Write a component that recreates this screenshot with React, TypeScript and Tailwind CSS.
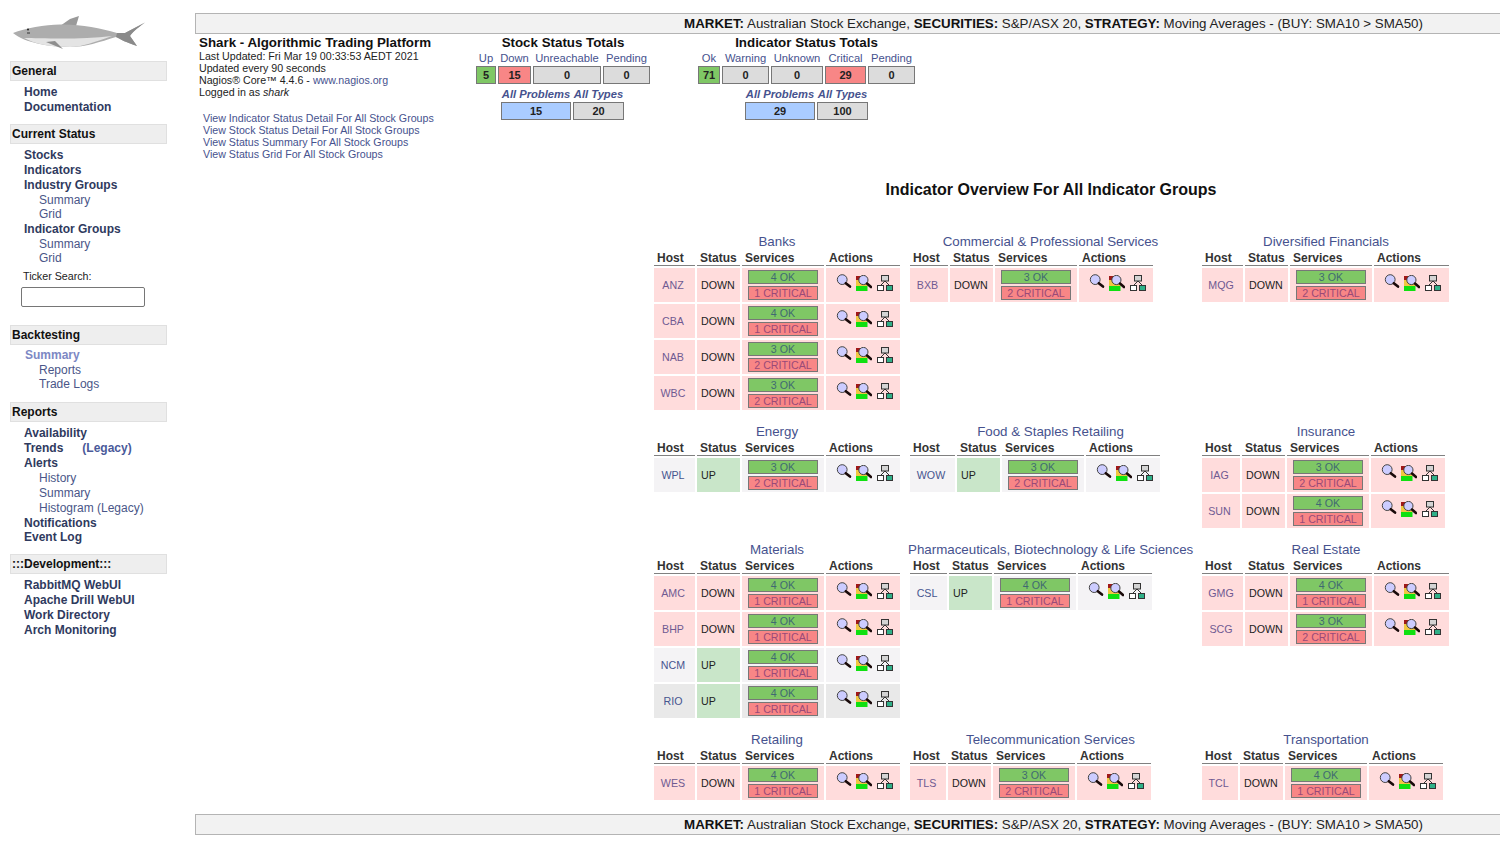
const font = "font-['Liberation_Sans',Arial,sans-serif]";

type NavItem = { label: string; kind: "main" | "sub" | "active"; extra?: string };

const MagnifierIcon = () => (
  <svg viewBox="0 0 16 16" className="w-4 h-4 shrink-0">
    <circle cx="6.2" cy="5.6" r="4.9" fill="#ccccff" stroke="#444" strokeWidth="1" />
    <path d="M9.8 9.2 L14 12.6" stroke="#1a0a0a" strokeWidth="2.6" strokeLinecap="round" />
  </svg>
);

const ChartIcon = () => (
  <svg viewBox="0 0 16 16" className="w-4 h-4 shrink-0 mt-[1px]">
    <rect x="0" y="1" width="5" height="5" fill="#a01818" />
    <rect x="0" y="5" width="11.5" height="6" fill="#f0c840" />
    <rect x="0" y="11" width="11.5" height="5" fill="#10e010" />
    <circle cx="7.4" cy="5" r="4.6" fill="#ccccff" stroke="#444" strokeWidth="1" />
    <path d="M11 8.6 L15 12" stroke="#1a0a0a" strokeWidth="2.6" strokeLinecap="round" />
  </svg>
);

const NetworkIcon = () => (
  <svg viewBox="0 0 16 16" className="w-4 h-4 shrink-0 ml-[1px] mt-[1px]">
    <path d="M8 6 L3.5 10.5 M8 6 L12.5 10.5" stroke="#333" strokeWidth="1" fill="none" />
    <rect x="4.5" y="0.5" width="7" height="5.5" fill="#d4d4d4" stroke="#333" />
    <rect x="0.5" y="10.5" width="6" height="5" fill="#fff" stroke="#333" />
    <rect x="9.5" y="10.5" width="6" height="5" fill="#2fb088" stroke="#333" />
  </svg>
);

const SharkLogo = () => (
  <svg viewBox="0 0 150 50" className="w-[150px] h-[50px] block">
    <path d="M60 25 L70 18 L79 15 L76 25 Z" fill="#9a9a9a" />
    <path
      d="M13 32 C25 27 45 24 60 23.5 C80 23 100 27 117 32 L125 32 L145 21.5 C136 28 132 32 130 35 L137 45 C127 42 120 38 116 36 C100 41 85 46 70 46 C50 46 25 42 13 32 Z"
      fill="#adadad"
    />
    <path d="M24 37 C40 37 80 39 112 35 C95 41 82 46 70 46 C50 46 35 43 24 37 Z" fill="#e4e4e4" />
    <path d="M46 41 L63 48 L55 40 Z" fill="#8e8e8e" />
    <path d="M117 32 L125 32 L145 21.5 C136 28 132 32 130 35 L137 45 C127 42 120 38 116 36 Z" fill="#8a8a8a" />
    <circle cx="28" cy="28.5" r="1" fill="#222" />
    <path d="M27 32 L30 32" stroke="#333" strokeWidth="1" />
  </svg>
);

const navClass = (kind: NavItem["kind"]) => {
  if (kind === "main") return "font-bold text-[#2f3a5e] pl-[14px]";
  if (kind === "active") return "font-bold text-[#7c88c4] pl-[15px]";
  return "text-[#4a5688] pl-[29px]";
};

const NavList = ({ items, spacing = "pt-[4px] leading-[14.7px]" }: { items: NavItem[]; spacing?: string }) => (
  <ul className={spacing}>
    {items.map((item) => (
      <li key={item.label + item.kind} className={`text-[12px] whitespace-nowrap ${navClass(item.kind)}`}>
        {item.label}
        {item.extra && <span className="font-bold text-[#4a5a9a] pl-[19px]">{item.extra}</span>}
      </li>
    ))}
  </ul>
);

const NavHeader = ({ title }: { title: string }) => (
  <div className="h-5 w-[157px] bg-[#eeeeee] border border-[#e0e0e0] px-[1px] text-[12px] leading-[18px] font-bold text-[#111]">
    {title}
  </div>
);

const Sidebar = () => (
  <aside className="w-[195px] shrink-0">
    <div className="pt-[1px] pb-[10px]">
      <SharkLogo />
    </div>
    <div className="pl-[10px]">
      <NavHeader title="General" />
      <NavList
        items={[
          { label: "Home", kind: "main" },
          { label: "Documentation", kind: "main" },
        ]}
      />
      <div className="h-[10px]" />
      <NavHeader title="Current Status" />
      <NavList
        items={[
          { label: "Stocks", kind: "main" },
          { label: "Indicators", kind: "main" },
          { label: "Industry Groups", kind: "main" },
          { label: "Summary", kind: "sub" },
          { label: "Grid", kind: "sub" },
          { label: "Indicator Groups", kind: "main" },
          { label: "Summary", kind: "sub" },
          { label: "Grid", kind: "sub" },
        ]}
      />
      <div className="pl-[13px] pt-[3px] text-[10.7px] leading-[14px] text-[#222]">Ticker Search:</div>
      <input className="block ml-[11px] mt-[4px] w-[124px] h-5 bg-white border border-[#767676] rounded-[2px]" />
      <div className="h-[18px]" />
      <NavHeader title="Backtesting" />
      <NavList
        spacing="pt-[3px] leading-[14.7px]"
        items={[
          { label: "Summary", kind: "active" },
          { label: "Reports", kind: "sub" },
          { label: "Trade Logs", kind: "sub" },
        ]}
      />
      <div className="h-[10px]" />
      <NavHeader title="Reports" />
      <NavList
        spacing="pt-[4px] leading-[14.9px]"
        items={[
          { label: "Availability", kind: "main" },
          { label: "Trends", kind: "main", extra: "(Legacy)" },
          { label: "Alerts", kind: "main" },
          { label: "History", kind: "sub" },
          { label: "Summary", kind: "sub" },
          { label: "Histogram (Legacy)", kind: "sub" },
          { label: "Notifications", kind: "main" },
          { label: "Event Log", kind: "main" },
        ]}
      />
      <div className="h-[9px]" />
      <NavHeader title=":::Development:::" />
      <NavList
        spacing="pt-[4px] leading-[15px]"
        items={[
          { label: "RabbitMQ WebUI", kind: "main" },
          { label: "Apache Drill WebUI", kind: "main" },
          { label: "Work Directory", kind: "main" },
          { label: "Arch Monitoring", kind: "main" },
        ]}
      />
    </div>
  </aside>
);

const MarketBar = () => (
  <div className="h-[21px] bg-[#f2f2f2] border border-r-0 border-[#b4b4b4] pl-[411px] text-center text-[13.33px] leading-[19px] text-[#222] whitespace-nowrap">
    <b className="text-[#111]">MARKET:</b> Australian Stock Exchange, <b className="text-[#111]">SECURITIES:</b> S&amp;P/ASX 20, <b className="text-[#111]">STRATEGY:</b> Moving Averages - (BUY: SMA10 &gt; SMA50)
  </div>
);

const cellTone: Record<string, string> = {
  up: "bg-[#7fc765]",
  critical: "bg-[#f88686]",
  problem: "bg-[#aaccff]",
  plain: "bg-[#dcdcdc]",
};

type Total = { label: string; value: string; tone: string };

const TotalsRow = ({ cols, items, italic }: { cols: string; items: Total[]; italic?: boolean }) => (
  <div className={`grid gap-x-[2px] justify-center ${cols}`}>
    {items.map((t) => (
      <div key={t.label} className={`h-[15px] text-center text-[11.2px] leading-[15px] text-[#46528e] whitespace-nowrap ${italic ? "italic font-bold" : ""}`}>
        {t.label}
      </div>
    ))}
    {items.map((t) => (
      <div key={t.label + "v"} className={`h-[18px] border border-[#777] text-center text-[11px] leading-[16px] font-bold text-[#222] ${cellTone[t.tone]}`}>
        {t.value}
      </div>
    ))}
  </div>
);

const TotalsBlock = ({ title, children, width }: { title: string; children: React.ReactNode; width: string }) => (
  <div className={`shrink-0 ${width}`}>
    <div className="h-[16px] text-center text-[13.33px] leading-[15px] font-bold text-[#111] whitespace-nowrap">{title}</div>
    {children}
  </div>
);

const TopPanel = () => (
  <div className="flex pt-[1px] h-[128px]">
    <div className="w-[281px] shrink-0 pl-[4px] text-[#222]">
      <div className="h-[15px] text-[13.33px] leading-[15px] font-bold text-[#111] whitespace-nowrap">Shark - Algorithmic Trading Platform</div>
      <div className="text-[10.67px] leading-[12px] whitespace-nowrap">
        <div>Last Updated: Fri Mar 19 00:33:53 AEDT 2021</div>
        <div>Updated every 90 seconds</div>
        <div>
          Nagios® Core™ 4.4.6 - <span className="text-[#46528e]">www.nagios.org</span>
        </div>
        <div>
          Logged in as <i>shark</i>
        </div>
      </div>
      <div className="pt-[14px] pl-[4px] text-[10.67px] leading-[12px] text-[#46528e] whitespace-nowrap">
        <div>View Indicator Status Detail For All Stock Groups</div>
        <div>View Stock Status Detail For All Stock Groups</div>
        <div>View Status Summary For All Stock Groups</div>
        <div>View Status Grid For All Stock Groups</div>
      </div>
    </div>
    <TotalsBlock title="Stock Status Totals" width="w-[174px]">
      <TotalsRow
        cols="grid-cols-[20px_33px_68px_47px]"
        items={[
          { label: "Up", value: "5", tone: "up" },
          { label: "Down", value: "15", tone: "critical" },
          { label: "Unreachable", value: "0", tone: "plain" },
          { label: "Pending", value: "0", tone: "plain" },
        ]}
      />
      <div className="h-[3px]" />
      <TotalsRow
        italic
        cols="grid-cols-[70px_51px] -ml-[1px]"
        items={[
          { label: "All Problems", value: "15", tone: "problem" },
          { label: "All Types", value: "20", tone: "plain" },
        ]}
      />
    </TotalsBlock>
    <div className="w-[48px] shrink-0" />
    <TotalsBlock title="Indicator Status Totals" width="w-[217px]">
      <TotalsRow
        cols="grid-cols-[22px_47px_52px_41px_47px]"
        items={[
          { label: "Ok", value: "71", tone: "up" },
          { label: "Warning", value: "0", tone: "plain" },
          { label: "Unknown", value: "0", tone: "plain" },
          { label: "Critical", value: "29", tone: "critical" },
          { label: "Pending", value: "0", tone: "plain" },
        ]}
      />
      <div className="h-[3px]" />
      <TotalsRow
        italic
        cols="grid-cols-[70px_51px]"
        items={[
          { label: "All Problems", value: "29", tone: "problem" },
          { label: "All Types", value: "100", tone: "plain" },
        ]}
      />
    </TotalsBlock>
  </div>
);

type Host = { name: string; up?: boolean; ok: number; crit: number; dark?: boolean };
type Group = { title: string; cols: string; titleClass: string; tableClass: string; hosts: Host[] };

const HostRow = ({ host }: { host: Host }) => {
  const rowBg = host.up ? (host.dark ? "bg-[#e9e9e9]" : "bg-[#f4f3f5]") : "bg-[#ffdcdc]";
  const hostText = host.up ? "text-[#47558f]" : "text-[#6f5a92]";
  return (
    <>
      <div className={`h-[34px] flex items-center justify-center text-[10.67px] pr-[3px] ${rowBg} ${hostText}`}>{host.name}</div>
      <div className={`h-[34px] flex items-center pl-1 text-[10.67px] text-[#222] ${host.up ? "bg-[#c9e6c9]" : rowBg}`}>
        {host.up ? "UP" : "DOWN"}
      </div>
      <div className={`h-[34px] flex flex-col items-center pt-[2px] gap-[2px] ${rowBg}`}>
        <div className="w-[70px] h-[14px] border border-[#777] bg-[#7fc765] text-center text-[10.67px] leading-[12px] text-[#3f6a72]">
          {host.ok} OK
        </div>
        <div className="w-[70px] h-[14px] border border-[#777] bg-[#f88686] text-center text-[10.67px] leading-[12px] text-[#9a4a78]">
          {host.crit} CRITICAL
        </div>
      </div>
      <div className={`h-[34px] flex items-start pl-[10px] pt-[6px] gap-[4px] ${rowBg}`}>
        <MagnifierIcon />
        <ChartIcon />
        <NetworkIcon />
      </div>
    </>
  );
};

const GroupTable = ({ group }: { group: Group }) => (
  <div>
    <div className={`h-4 text-center text-[13.33px] leading-[16px] text-[#46528e] whitespace-nowrap ${group.titleClass}`}>{group.title}</div>
    <div className={`grid gap-[2px] w-max ${group.cols} ${group.tableClass}`}>
      {["Host", "Status", "Services", "Actions"].map((h) => (
        <div key={h} className="h-4 pl-[3px] border-b border-[#808080] text-[12px] leading-[17px] font-bold text-[#333]">
          {h}
        </div>
      ))}
      {group.hosts.map((host) => (
        <HostRow key={host.name} host={host} />
      ))}
    </div>
  </div>
);

const col1 = { titleClass: "pr-[8px]", tableClass: "" };
const col2 = { titleClass: "pr-[9px]", tableClass: "ml-[2px]" };
const col3 = { titleClass: "", tableClass: "" };

const groups: Group[] = [
  {
    title: "Banks",
    cols: "grid-cols-[41px_43px_82px_74px]",
    ...col1,
    hosts: [
      { name: "ANZ", ok: 4, crit: 1 },
      { name: "CBA", ok: 4, crit: 1 },
      { name: "NAB", ok: 3, crit: 2 },
      { name: "WBC", ok: 3, crit: 2 },
    ],
  },
  {
    title: "Commercial & Professional Services",
    cols: "grid-cols-[38px_43px_82px_74px]",
    ...col2,
    hosts: [{ name: "BXB", ok: 3, crit: 2 }],
  },
  {
    title: "Diversified Financials",
    cols: "grid-cols-[41px_43px_82px_75px]",
    ...col3,
    hosts: [{ name: "MQG", ok: 3, crit: 2 }],
  },
  {
    title: "Energy",
    cols: "grid-cols-[41px_43px_82px_74px]",
    ...col1,
    hosts: [{ name: "WPL", up: true, ok: 3, crit: 2 }],
  },
  {
    title: "Food & Staples Retailing",
    cols: "grid-cols-[45px_43px_82px_74px]",
    ...col2,
    hosts: [{ name: "WOW", up: true, ok: 3, crit: 2 }],
  },
  {
    title: "Insurance",
    cols: "grid-cols-[38px_43px_82px_74px]",
    ...col3,
    hosts: [
      { name: "IAG", ok: 3, crit: 2 },
      { name: "SUN", ok: 4, crit: 1 },
    ],
  },
  {
    title: "Materials",
    cols: "grid-cols-[41px_43px_82px_74px]",
    ...col1,
    hosts: [
      { name: "AMC", ok: 4, crit: 1 },
      { name: "BHP", ok: 4, crit: 1 },
      { name: "NCM", up: true, ok: 4, crit: 1 },
      { name: "RIO", up: true, dark: true, ok: 4, crit: 1 },
    ],
  },
  {
    title: "Pharmaceuticals, Biotechnology & Life Sciences",
    cols: "grid-cols-[37px_43px_82px_74px]",
    ...col2,
    hosts: [{ name: "CSL", up: true, ok: 4, crit: 1 }],
  },
  {
    title: "Real Estate",
    cols: "grid-cols-[41px_43px_82px_75px]",
    ...col3,
    hosts: [
      { name: "GMG", ok: 4, crit: 1 },
      { name: "SCG", ok: 3, crit: 2 },
    ],
  },
  {
    title: "Retailing",
    cols: "grid-cols-[41px_43px_82px_74px]",
    ...col1,
    hosts: [{ name: "WES", ok: 4, crit: 1 }],
  },
  {
    title: "Telecommunication Services",
    cols: "grid-cols-[36px_43px_82px_74px]",
    ...col2,
    hosts: [{ name: "TLS", ok: 3, crit: 2 }],
  },
  {
    title: "Transportation",
    cols: "grid-cols-[36px_43px_82px_74px]",
    ...col3,
    hosts: [{ name: "TCL", ok: 4, crit: 1 }],
  },
];

const App = () => (
  <div className={`flex w-[1500px] min-h-[863px] bg-white ${font}`}>
    <Sidebar />
    <main className="flex-1 min-w-0 pt-[13px]">
      <MarketBar />
      <TopPanel />
      <h1 className="h-5 pl-[407px] mt-[18px] text-center text-[16px] leading-[20px] font-bold text-[#111]">
        Indicator Overview For All Indicator Groups
      </h1>
      <div className="grid grid-cols-[254px_294px_248px] gap-y-[14px] pl-[459px] mt-[34px]">
        {groups.map((g) => (
          <GroupTable key={g.title} group={g} />
        ))}
      </div>
      <div className="mt-[14px]">
        <MarketBar />
      </div>
    </main>
  </div>
);

export default App;
